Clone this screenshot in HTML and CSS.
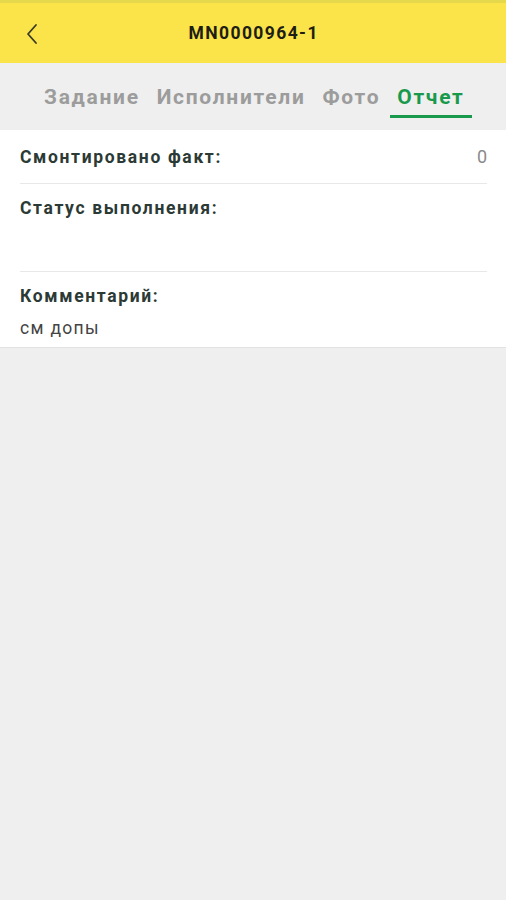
FILE: index.html
```html
<!DOCTYPE html>
<html lang="ru">
<head>
<meta charset="utf-8">
<link rel="stylesheet" href="styles.css">
</head>
<body>
<div class="app">
  <div class="statusbar"></div>
  <header class="header">
    <button class="back" aria-label="Назад">
      <svg width="14" height="22" viewBox="0 0 14 22"><path d="M11 2 L3 11 L11 20" fill="none" stroke="#3a3a2a" stroke-width="1.8" stroke-linecap="round" stroke-linejoin="round"/></svg>
    </button>
    <h1 class="title">MN0000964-1</h1>
  </header>
  <nav class="tabs">
    <span class="tab">Задание</span>
    <span class="tab">Исполнители</span>
    <span class="tab">Фото</span>
    <span class="tab active">Отчет</span>
  </nav>
  <section class="card">
    <div class="row row-inline">
      <span class="label">Смонтировано факт:</span>
      <span class="num">0</span>
    </div>
    <div class="row row-status">
      <span class="label">Статус выполнения:</span>
    </div>
    <div class="row row-comment">
      <span class="label">Комментарий:</span>
      <span class="value">см допы</span>
    </div>
  </section>
</div>
</body>
</html>
```
FILE: styles.css
```css
* { box-sizing: border-box; }
html, body { margin: 0; padding: 0; }
body {
  background: #efefef;
  font-family: Roboto, "Noto Sans", "Liberation Sans", sans-serif;
  width: 506px;
  min-height: 900px;
}
.app { display: flex; flex-direction: column; }
.statusbar { height: 3px; background: #e6d84c; }
.header {
  height: 60px;
  background: #fbe44a;
  display: flex;
  align-items: center;
  justify-content: center;
  position: relative;
}
.back {
  position: absolute;
  left: 22px;
  top: 19px;
  border: 0;
  background: none;
  padding: 0;
  width: 20px;
  height: 24px;
  display: flex;
  align-items: center;
  justify-content: center;
}
.title {
  margin: 0;
  font-size: 17.5px;
  font-weight: 700;
  color: #1e1e14;
  letter-spacing: 1.4px;
  padding-left: 1.4px;
}
.tabs {
  height: 67px;
  display: flex;
  justify-content: flex-start;
  align-items: flex-start;
  padding-top: 22px;
  padding-left: 44px;
}
.tab {
  font-size: 21px;
  font-weight: 700;
  color: #9c9c9c;
  letter-spacing: 1.7px;
  margin-right: 17px;
  padding-bottom: 6px;
  border-bottom: 3px solid transparent;
}
.tab.active {
  color: #19994b;
  border-bottom-color: #19994b;
  margin-left: -7px;
  padding-left: 7px;
  padding-right: 7px;
}
.card {
  background: #fff;
  padding: 0 19px 0 20px;
  border-bottom: 1px solid #e2e2e2;
}
.row {
  display: flex;
  flex-direction: column;
  border-bottom: 1px solid #e8e8e8;
}
.row:last-child { border-bottom: 0; }
.row-inline {
  flex-direction: row;
  justify-content: space-between;
  align-items: center;
  height: 54px;
}
.row-status { height: 88px; padding-top: 13px; }
.row-comment { height: 75px; padding-top: 13px; gap: 11px; }
.label {
  font-size: 17.5px;
  font-weight: 700;
  color: #2c3a35;
  line-height: 22px;
  letter-spacing: 1.65px;
}
.num {
  font-size: 18px;
  color: #8a8a8a;
}
.value {
  font-size: 17.5px;
  color: #444;
  line-height: 20px;
  letter-spacing: 1.3px;
}
```
